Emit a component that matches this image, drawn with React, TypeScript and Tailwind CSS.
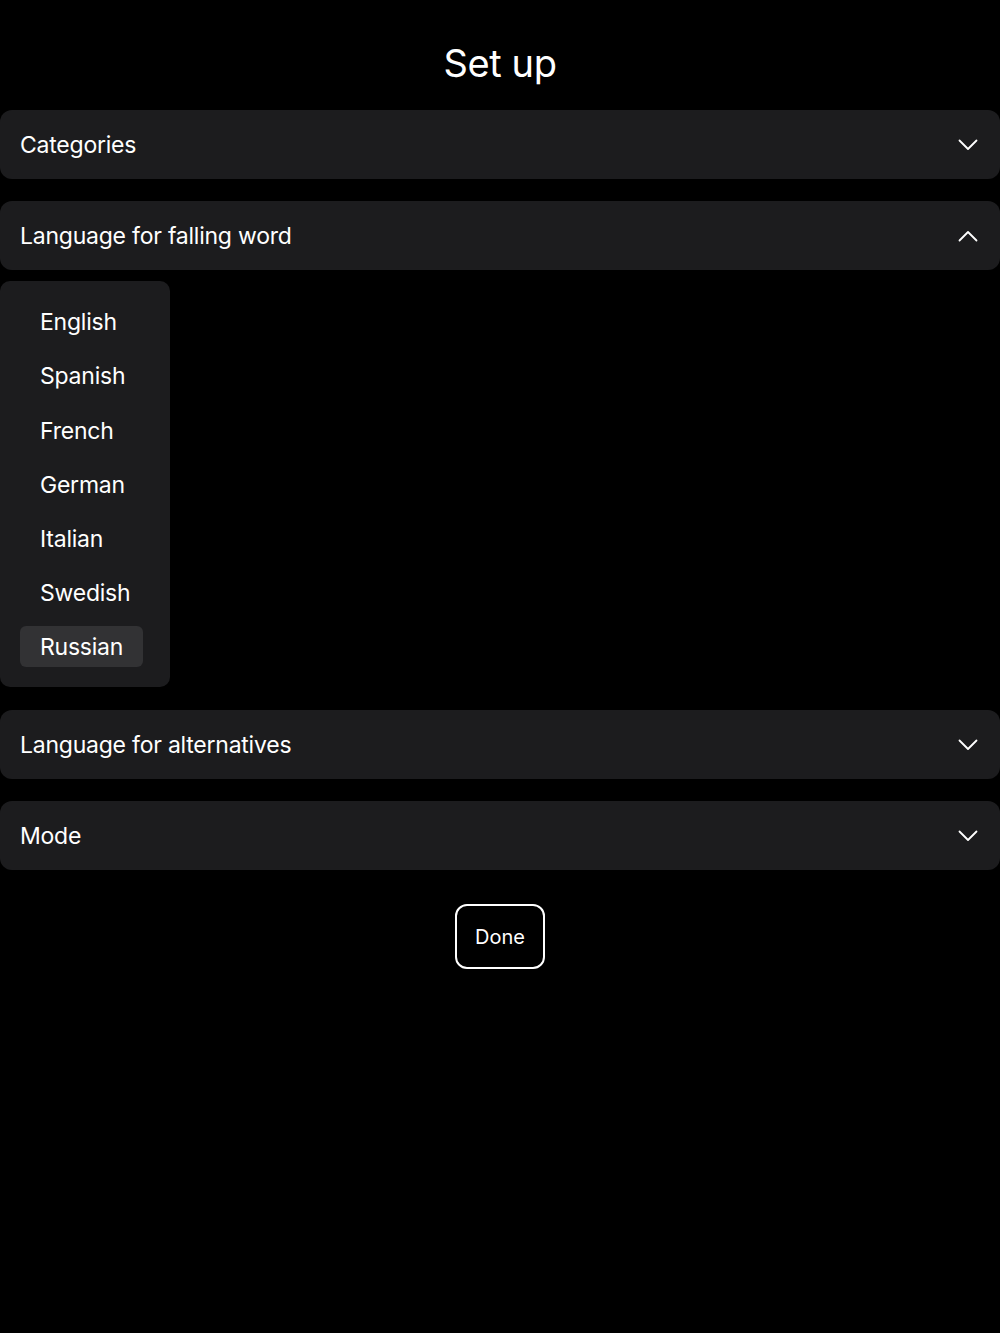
import { useState } from 'react'

const languages = ['English', 'Spanish', 'French', 'German', 'Italian', 'Swedish', 'Russian']

function Chevron({ up }: { up?: boolean }) {
  return (
    <svg width="20" height="12" viewBox="0 0 20 12" fill="none" className="shrink-0">
      <path
        d={up ? 'M1.5 10.5 L10 2 L18.5 10.5' : 'M1.5 1.5 L10 10 L18.5 1.5'}
        stroke="white"
        strokeWidth="1.8"
        strokeLinecap="round"
        strokeLinejoin="round"
      />
    </svg>
  )
}

function Row({ label, open, onClick }: { label: string; open?: boolean; onClick?: () => void }) {
  return (
    <button
      onClick={onClick}
      className="flex h-[69px] w-full items-center justify-between rounded-[12px] bg-[#1c1c1e] pl-5 pr-[22px] text-left"
    >
      <span className="pt-[2px] text-[23px] tracking-[-0.01em] text-white">{label}</span>
      <Chevron up={open} />
    </button>
  )
}

export default function App() {
  const [selected, setSelected] = useState('Russian')

  return (
    <div
      className="min-h-[1333px] w-full bg-black text-white"
      style={{ fontFamily: 'Inter, "Noto Sans", sans-serif' }}
    >
      <h1 className="pt-[38px] pb-[21px] text-center text-[38px] leading-[51px] tracking-[-0.01em]">Set up</h1>

      <div className="flex flex-col">
        <Row label="Categories" />

        <div className="mt-[22px]">
          <Row label="Language for falling word" open />
        </div>

        {/* Dropdown */}
        <div className="mt-[11px] flex h-[406px] w-[170px] flex-col items-start gap-[13.2px] rounded-[10px] bg-[#1c1c1e] px-5 py-5">
          {languages.map((lang) => (
            <button
              key={lang}
              onClick={() => setSelected(lang)}
              className={`flex h-[41px] shrink-0 items-center rounded-[6px] px-5 pt-[2px] text-[23px] tracking-[-0.01em] text-white ${
                selected === lang ? 'bg-[#323234]' : ''
              }`}
            >
              {lang}
            </button>
          ))}
        </div>

        <div className="mt-[23px]">
          <Row label="Language for alternatives" />
        </div>

        <div className="mt-[22px]">
          <Row label="Mode" />
        </div>
      </div>

      <div className="mt-[34px] flex justify-center">
        <button className="flex h-[65px] w-[90px] items-center justify-center rounded-[12px] border-2 border-white text-[20px] text-white">
          Done
        </button>
      </div>
    </div>
  )
}
